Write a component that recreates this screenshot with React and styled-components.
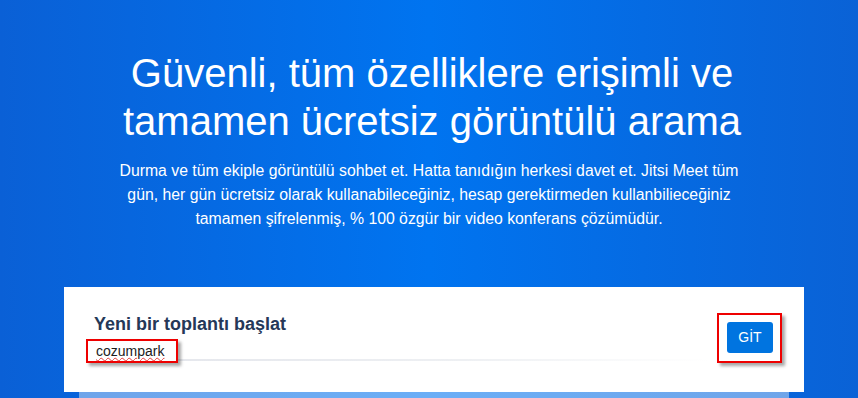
import React from "react";
import styled, { createGlobalStyle } from "styled-components";

const Global = createGlobalStyle`
  html, body { margin: 0; padding: 0; }
  body {
    width: 858px;
    height: 398px;
    overflow: hidden;
    font-family: "Liberation Sans", Arial, sans-serif;
  }
`;

const Hero = styled.main`
  box-sizing: border-box;
  width: 858px;
  height: 398px;
  padding-top: 49px;
  display: flex;
  flex-direction: column;
  align-items: center;
  background: linear-gradient(90deg, #0a60d6 0%, #0074f0 50%, #0a62d6 100%);
  color: #fff;
`;

const Heading = styled.h1`
  margin: 0 0 0 6px;
  width: 650px;
  font-size: 40px;
  line-height: 48px;
  font-weight: 400;
  text-align: center;
`;

const Lead = styled.p`
  margin: 14px 0 0;
  font-size: 15.8px;
  line-height: 24px;
  text-align: center;
  white-space: nowrap;
`;

const CardStack = styled.section`
  margin: 56px 0 0 10px;
  width: 740px;
  display: flex;
  flex-direction: column;
`;

const Card = styled.div`
  box-sizing: border-box;
  height: 105px;
  background: #fff;
  padding: 27px 31px 0 30px;
  display: flex;
  align-items: flex-start;
  gap: 17px;
`;

const Under = styled.div`
  margin: 0 15px;
  height: 20px;
  background: rgba(255, 255, 255, 0.42);
`;

const Column = styled.div`
  flex: 1;
  display: flex;
  flex-direction: column;
`;

const Title = styled.div`
  font-size: 18px;
  line-height: 20px;
  font-weight: 700;
  color: #253858;
`;

const InputRow = styled.div`
  position: relative;
  margin-top: 7px;
  height: 20px;
  &::after {
    content: "";
    position: absolute;
    left: 0;
    right: 0;
    bottom: 0;
    height: 2px;
    background: linear-gradient(90deg, #e3e5eb 0%, #eef0f3 60%, rgba(255,255,255,0) 100%);
  }
`;

const Marked = styled.span`
  position: absolute;
  z-index: 1;
  left: -8px;
  top: -2px;
  background: #fff;
  border: 2px solid #ee0000;
  padding: 0 12px 0 8px;
  box-shadow: 3px 3px 3px rgba(0, 0, 0, 0.35);
  font-size: 14px;
  line-height: 20px;
  color: #1c1c1c;
`;

const Typed = styled.span`
  text-decoration: underline wavy #e53935;
  text-decoration-thickness: 1px;
  text-underline-offset: 1px;
`;

const ButtonMark = styled.div`
  margin: -1px -9px 0 -10px;
  padding: 7px 7px 8px 8px;
  border: 2px solid #ee0000;
  box-shadow: 3px 3px 3px rgba(0, 0, 0, 0.35);
  background: #fff;
`;

const GoButton = styled.button`
  display: block;
  border: none;
  border-radius: 3px;
  background: #0074e0;
  color: #fff;
  font-family: "Liberation Sans", Arial, sans-serif;
  font-size: 14px;
  line-height: 17px;
  padding: 7px 0;
  width: 46px;
  cursor: pointer;
`;

export default function App() {
  return (
    <>
      <Global />
      <Hero>
        <Heading>Güvenli, tüm özelliklere erişimli ve tamamen ücretsiz görüntülü arama</Heading>
        <Lead>
          Durma ve tüm ekiple görüntülü sohbet et. Hatta tanıdığın herkesi davet et. Jitsi Meet tüm
          <br />
          gün, her gün ücretsiz olarak kullanabileceğiniz, hesap gerektirmeden kullanbilieceğiniz
          <br />
          tamamen şifrelenmiş, % 100 özgür bir video konferans çözümüdür.
        </Lead>
        <CardStack>
          <Card>
            <Column>
              <Title>Yeni bir toplantı başlat</Title>
              <InputRow>
                <Marked>
                  <Typed>cozumpark</Typed>
                </Marked>
              </InputRow>
            </Column>
            <ButtonMark>
              <GoButton>GİT</GoButton>
            </ButtonMark>
          </Card>
          <Under />
        </CardStack>
      </Hero>
    </>
  );
}
